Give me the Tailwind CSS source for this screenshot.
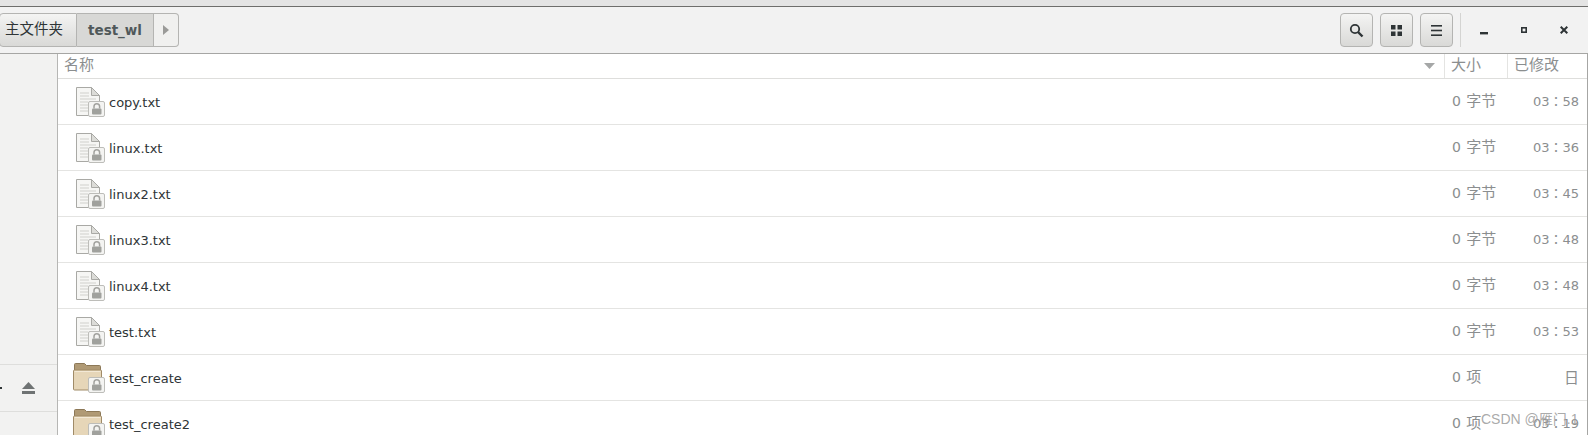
<!DOCTYPE html>
<html lang="zh">
<head>
    <meta charset="UTF-8">
    <title>test_wl</title>
    <script src="https://cdn.jsdelivr.net/npm/@tailwindcss/browser@4"></script>
</head>
<body class="bg-white overflow-hidden">
<div class="relative w-[1588px] h-[435px] overflow-hidden flex flex-col font-['DejaVu_Sans','Noto_Sans_CJK_SC',sans-serif] text-[14px] text-[#2e3436]">

    <div class="h-[6px] shrink-0 bg-[#e4e4e4]"></div>

    <!-- toolbar -->
    <div class="h-[48px] shrink-0 bg-[#f2f2f2] border-t border-t-[#6e6e6c] border-b border-b-[#a6a6a4] flex items-center">
        <div class="flex h-[34px] ml-[-1px]">
            <div class="w-[78px] flex items-center pl-[5px] text-[14.5px] border border-[#b4b4b2] rounded-l-[4px] bg-gradient-to-b from-[#f4f4f3] to-[#d9d9d7]">主文件夹</div>
            <div class="w-[77px] flex items-center justify-center border-y border-[#b4b4b2] border-r bg-[#d8d8d6] font-bold text-[13.5px] text-[#50585a]">test_wl</div>
            <div class="w-[25px] flex items-center justify-center border-y border-r border-[#b4b4b2] rounded-r-[4px] bg-[#f0f0ef]">
                <svg width="6" height="10" viewBox="0 0 6 10"><path d="M0 0 6 5 0 10z" fill="#9a9a98"/></svg>
            </div>
        </div>
        <div class="ml-auto flex gap-[7px] h-[34px]">
            <button class="w-[33px] flex items-center justify-center border border-[#b4b4b2] rounded-[4px] bg-gradient-to-b from-[#f4f4f3] to-[#d9d9d7]">
                <svg width="15" height="15" viewBox="0 0 15 15" fill="none" stroke="#2e3436"><circle cx="6" cy="6" r="4.2" stroke-width="1.8"/><path d="M9 9l4.5 4.5" stroke-width="2.4"/></svg>
            </button>
            <button class="w-[33px] flex items-center justify-center border border-[#b4b4b2] rounded-[4px] bg-gradient-to-b from-[#f4f4f3] to-[#d9d9d7]">
                <svg width="11" height="11" viewBox="0 0 11 11" fill="#2e3436"><rect width="4.500" height="4.500"/><rect x="6.500" width="4.500" height="4.500"/><rect y="6.500" width="4.500" height="4.500"/><rect x="6.500" y="6.500" width="4.500" height="4.500"/></svg>
            </button>
            <button class="w-[33px] flex items-center justify-center border border-[#b4b4b2] rounded-[4px] bg-gradient-to-b from-[#f4f4f3] to-[#d9d9d7]">
                <svg width="11" height="11" viewBox="0 0 11 11" fill="#2e3436"><rect width="11" height="1.600"/><rect y="4.700" width="11" height="1.600"/><rect y="9.400" width="11" height="1.600"/></svg>
            </button>
        </div>
        <div class="w-[1px] h-[34px] bg-[#d4d4d2] ml-[7px]"></div>
        <div class="flex items-center w-[127px] h-[34px] shrink-0">
            <svg class="ml-[19px] mt-[6px]" width="8" height="3" viewBox="0 0 8 3"><rect width="8" height="2.400" fill="#2e3436"/></svg>
            <svg class="ml-[33px]" width="6" height="6" viewBox="0 0 6 6" fill="none" stroke="#2e3436" stroke-width="1.600"><rect x=".8" y=".8" width="4.400" height="4.400"/></svg>
            <svg class="ml-[33px]" width="8" height="8" viewBox="0 0 8 8" stroke="#2e3436" stroke-width="2"><path d="M.7.7l6.600 6.600M7.300.7.7 7.300"/></svg>
        </div>
    </div>

    <div class="flex-1 flex min-h-0">
        <!-- sidebar -->
        <aside class="w-[58px] shrink-0 bg-[#f2f2f1] border-r border-r-[#b6b6b4] flex flex-col">
            <div class="h-[311px] shrink-0 border-b border-b-[#dededc]"></div>
            <div class="h-[47px] shrink-0 border-b border-b-[#dededc] flex items-center justify-between">
                <div class="w-[2px] h-[2px] bg-[#2e3436]"></div>
                <svg class="mr-[22px]" width="13" height="12" viewBox="0 0 13 12" fill="#6f7373"><path d="M6.500 0 13 7H0z"/><rect y="9" width="13" height="3"/></svg>
            </div>
        </aside>

        <!-- file list -->
        <main class="flex-1 min-w-0 border-r border-r-[#a6a6a4]">
            <div class="h-[25px] flex border-b border-b-[#dededc] text-[15px] leading-[22px] text-[#8b8e8f]">
                <div class="w-[1387px] flex items-start justify-between pl-[6px] pr-[9px] border-r border-r-[#e4e4e2]">
                    <span>名称</span>
                    <svg class="mt-[9px]" width="11" height="6" viewBox="0 0 11 6"><path d="M0 0h11L5.500 6z" fill="#a5a7a7"/></svg>
                </div>
                <div class="w-[63px] pl-[6px] border-r border-r-[#e4e4e2]">大小</div>
                <div class="flex-1 pl-[6px]">已修改</div>
            </div>
            <div id="rows"></div>
        </main>
    </div>

    <div class="absolute left-[1481px] top-[411px] text-[14px] leading-[16px] text-[#a0a0a0]/90 font-['Liberation_Sans','Noto_Sans_CJK_SC',sans-serif]">CSDN @雁门.1</div>
</div>

<script>
    const lockBadge = `<rect x="13.500" y="14.500" width="16" height="15" rx="1.500" fill="#f4f4f2" stroke="#bdbdb9"/>
        <path d="M19 21.500v-2a2.800 2.800 0 0 1 5.600 0v2" fill="none" stroke="#a2a29e" stroke-width="1.500"/>
        <rect x="17" y="21.500" width="9.500" height="6" rx="1" fill="#a0a19d"/>`;

    const fileIcon = `<svg class="ml-[17px] shrink-0" width="30" height="30" viewBox="0 0 30 30">
        <path d="M1.500 .5h15l8 8v20h-23z" fill="#f6f6f4" stroke="#a9a9a5"/>
        <path d="M16.500 .5v8h8z" fill="#dcdcd8" stroke="#a9a9a5"/>
        <path d="M5 6h9M5 9h9M5 12h16M5 15h8M5 18h8M5 21h8M5 24h8" stroke="#d0d0cc"/>
        ${lockBadge}</svg>`;

    const folderIcon = `<svg class="ml-[15px] shrink-0" width="32" height="30" viewBox="-2 0 32 30">
        <path d="M-.5 7V1.500q0-1 1-1h9l2 2h13q1 0 1 1V9H-.5z" fill="#b09a75" stroke="#8c7857"/>
        <path d="M-1.500 8q0-1 1-1h26q1 0 1 1v19h-27q-1 0-1-1z" fill="#e6d6b8" stroke="#a08b68"/>
        <path d="M-.5 8.500h26" stroke="#f3e9d6"/>
        ${lockBadge}</svg>`;

    const files = [
      ["copy.txt", "字节", "03：58", fileIcon],
      ["linux.txt", "字节", "03：36", fileIcon],
      ["linux2.txt", "字节", "03：45", fileIcon],
      ["linux3.txt", "字节", "03：48", fileIcon],
      ["linux4.txt", "字节", "03：48", fileIcon],
      ["test.txt", "字节", "03：53", fileIcon],
      ["test_create", "项", "日", folderIcon],
      ["test_create2", "项", "03：19", folderIcon],
    ];

    document.getElementById("rows").innerHTML = files.map(([name, unit, time, icon]) => `
      <div class="h-[46px] flex items-center border-b border-b-[#e4e4e2]">
        <div class="w-[1388px] flex items-center">${icon}<span class="ml-[4px] text-[13px] mt-[3px]">${name}</span></div>
        <div class="w-[63px] pl-[6px] text-[14px] text-[#8b8e8f]">0 <span class="ml-[1px] text-[15px]">${unit}</span></div>
        <div class="flex-1 text-right pr-[8px] mt-[1px] text-[#8b8e8f] ${time === "日" ? "text-[15px]" : "text-[13px]"} font-['DejaVu_Sans','Noto_Sans_CJK_TC',sans-serif]">${time}</div>
      </div>`).join("");
</script>
</body>
</html>
